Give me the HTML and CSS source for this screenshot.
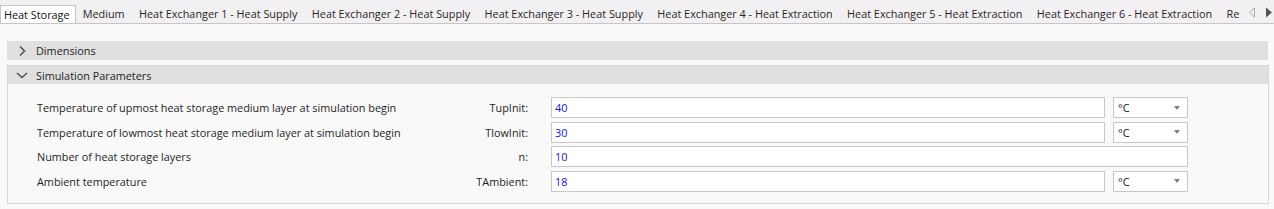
FILE: index.html
```html
<!DOCTYPE html>
<html>
<head>
<meta charset="utf-8">
<link rel="stylesheet" href="styles.css">
</head>
<body>
<div class="tabstrip">
  <div class="tablist">
    <div class="tab active">Heat Storage</div>
    <div class="tab">Medium</div>
    <div class="tab">Heat Exchanger 1 - Heat Supply</div>
    <div class="tab">Heat Exchanger 2 - Heat Supply</div>
    <div class="tab">Heat Exchanger 3 - Heat Supply</div>
    <div class="tab">Heat Exchanger 4 - Heat Extraction</div>
    <div class="tab">Heat Exchanger 5 - Heat Extraction</div>
    <div class="tab">Heat Exchanger 6 - Heat Extraction</div>
    <div class="tab">Results</div>
  </div>
  <div class="scroller">
    <svg width="8" height="11" viewBox="0 0 8 11"><path d="M6.5 1 L1.5 5.5 L6.5 10 Z" fill="none" stroke="#a8a8a8" stroke-width="1"/></svg>
    <svg width="8" height="11" viewBox="0 0 8 11"><path d="M1 0.5 L7 5.5 L1 10.5 Z" fill="#555"/></svg>
  </div>
</div>

<div class="content">
  <div class="section-header collapsed">
    <svg class="chev" width="12" height="12" viewBox="0 0 12 12"><path d="M4 1.5 L8.5 6 L4 10.5" fill="none" stroke="#555" stroke-width="1.6"/></svg>
    <span>Dimensions</span>
  </div>

  <div class="section">
    <div class="section-header">
      <svg class="chev" width="12" height="12" viewBox="0 0 12 12"><path d="M1 4 L6 8.5 L11 4" fill="none" stroke="#555" stroke-width="1.6"/></svg>
      <span>Simulation Parameters</span>
    </div>
    <div class="params">
      <div class="label">Temperature of upmost heat storage medium layer at simulation begin</div>
      <div class="sym">TupInit:</div>
      <div class="input">40</div>
      <div class="unit"><span>°C</span><span class="caret"></span></div>

      <div class="label">Temperature of lowmost heat storage medium layer at simulation begin</div>
      <div class="sym">TlowInit:</div>
      <div class="input">30</div>
      <div class="unit"><span>°C</span><span class="caret"></span></div>

      <div class="label">Number of heat storage layers</div>
      <div class="sym">n:</div>
      <div class="input wide">10</div>

      <div class="label">Ambient temperature</div>
      <div class="sym">TAmbient:</div>
      <div class="input">18</div>
      <div class="unit"><span>°C</span><span class="caret"></span></div>
    </div>
  </div>
</div>
</body>
</html>
```

FILE: styles.css
```css
* { box-sizing: border-box; }

body {
  margin: 0;
  background: #f9f9f9;
  font-family: "Open Sans", "Noto Sans", sans-serif;
  font-size: 10.85px;
  color: #1e1e1e;
  width: 1274px;
  height: 209px;
  overflow: hidden;
}

.tabstrip {
  display: flex;
  height: 24px;
  background: #f3f0f3;
  border-bottom: 1px solid #c6c6c6;
}

.tablist {
  display: flex;
  width: 1240px;
  overflow: hidden;
  flex: none;
}

.tab {
  flex: none;
  padding: 4px 7.2px 0;
  height: 23px;
  line-height: 19px;
  white-space: nowrap;
  color: #2a1f24;
}

.tab.active {
  background: #fff;
  margin-top: 5px;
  padding: 0 5px 0 3px;
  line-height: 18px;
  border: 1px solid #c6c6c6;
  border-bottom: none;
  margin-bottom: -1px;
  height: 20px;
  color: #111;
}

.scroller {
  flex: 1;
  display: flex;
  align-items: center;
  gap: 9px;
  padding-left: 8px;
  padding-top: 2px;
}

.content {
  padding: 17px 6px 0 7px;
}

.section-header {
  display: flex;
  align-items: center;
  height: 19px;
  background: #e0e0e0;
  padding-left: 9px;
}

.section-header .chev {
  flex: none;
  margin-right: 8px;
}

.section-header.collapsed {
  width: 1261px;
  margin-bottom: 5px;
}

.section {
  width: 1262px;
  border: 1px solid #d6d6d6;
  background: #f9f9f9;
}

.section > .section-header {
  height: 18px;
  padding-left: 8px;
}

.params {
  display: grid;
  grid-template-columns: 433px 58px 554px 75px;
  grid-auto-rows: 24.67px;
  padding: 13px 0 7px 29px;
  align-items: start;
}

.label, .sym {
  height: 21px;
  line-height: 21px;
  white-space: nowrap;
}

.sym {
  text-align: right;
}

.input {
  margin-left: 23px;
  height: 21px;
  width: 554px;
  background: #fff;
  border: 1px solid #c8c8c8;
  color: #1010ff;
  padding-left: 3px;
  line-height: 19px;
}

.input.wide {
  grid-column: 3 / 5;
  width: 637px;
}

.unit {
  margin-left: 31px;
  width: 75px;
  height: 21px;
  background: #fff;
  border: 1px solid #c8c8c8;
  display: flex;
  align-items: center;
  justify-content: space-between;
  padding: 0 7px 0 4px;
  color: #111;
}

.caret {
  width: 0;
  height: 0;
  border-left: 3.5px solid transparent;
  border-right: 3.5px solid transparent;
  border-top: 4px solid #808080;
}
```
